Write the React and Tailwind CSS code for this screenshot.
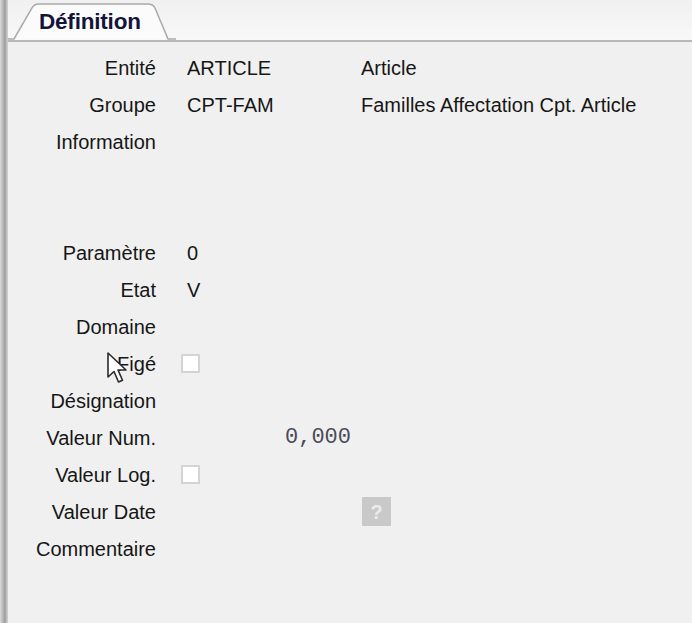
const rows = [
  { label: 'Entité', value: 'ARTICLE', extra: 'Article' },
  { label: 'Groupe', value: 'CPT-FAM', extra: 'Familles Affectation Cpt. Article' },
  { label: 'Information' },
  { label: '' },
  { label: '' },
  { label: 'Paramètre', value: '0' },
  { label: 'Etat', value: 'V' },
  { label: 'Domaine' },
  { label: 'Figé', kind: 'check' },
  { label: 'Désignation' },
  { label: 'Valeur Num.', kind: 'num' },
  { label: 'Valeur Log.', kind: 'check' },
  { label: 'Valeur Date', kind: 'date' },
  { label: 'Commentaire' },
];

const CheckBox = () => (
  <div className="ml-[-6px] h-[19px] w-[19px] border-2 border-[#d4d4d4] bg-white" />
);

const Tab = () => (
  <div className="relative mt-[3px] h-[39px] w-[168px]">
    <svg className="absolute inset-0" width="168" height="39" viewBox="0 0 168 39">
      <path
        d="M0 38 L6 38 L24 7 Q26 3 31 3 L140 3 Q145 3 147 7 L160 38 L168 38"
        fill="#fbfbfb"
        stroke="#a9a9a9"
        strokeWidth="1.5"
      />
    </svg>
    <span className="absolute left-[31px] top-[8px] text-[22.5px] font-bold leading-[26px] tracking-[-0.2px] text-[#14143a]">
      Définition
    </span>
  </div>
);

const Cursor = () => (
  <svg
    className="pointer-events-none absolute left-[106px] top-[351px]"
    width="24"
    height="34"
    viewBox="0 0 24 34"
  >
    <path
      d="M2 2 L2 26 L8 20.5 L12.5 31 L16.5 29.3 L12 19 L20 19 Z"
      fill="#ffffff"
      stroke="#2a2a2a"
      strokeWidth="1.6"
      strokeLinejoin="round"
    />
  </svg>
);

export default function App() {
  return (
    <div className="relative flex h-[623px] w-[692px] overflow-hidden bg-[#f0f0f0] font-['Liberation_Sans',Arial,sans-serif] text-[#161616]">
      <div className="w-[8px] shrink-0 bg-[linear-gradient(to_right,#d9d9d9,#b4b4b4_40%,#9c9c9c_60%,#d6d6d6)]" />
      <div className="flex flex-1 flex-col">
        <div className="flex h-[42px] items-end border-b-2 border-[#b8b8b8] bg-[linear-gradient(to_bottom,#f0f0f0,#f8f8f8)]">
          <Tab />
        </div>
        <div className="flex flex-col pt-[7px]">
          {rows.map((r, i) => (
            <div key={i} className="flex h-[37px] items-center text-[20px]">
              <div className="w-[148px] shrink-0 text-right">{r.label}</div>
              <div className="ml-[31px] w-[174px] shrink-0">
                {r.value}
                {r.kind === 'check' && <CheckBox />}
                {r.kind === 'num' && (
                  <div className="w-[164px] text-right font-['Liberation_Mono',monospace] text-[22px] text-[#4a4a58]">
                    0,000
                  </div>
                )}
              </div>
              <div>
                {r.extra}
                {r.kind === 'date' && (
                  <div className="ml-[1px] flex h-[29px] w-[29px] items-center justify-center bg-[#c9c9c9] text-[20px] font-bold text-[#ebebeb]">
                    ?
                  </div>
                )}
              </div>
            </div>
          ))}
        </div>
      </div>
      <Cursor />
    </div>
  );
}
